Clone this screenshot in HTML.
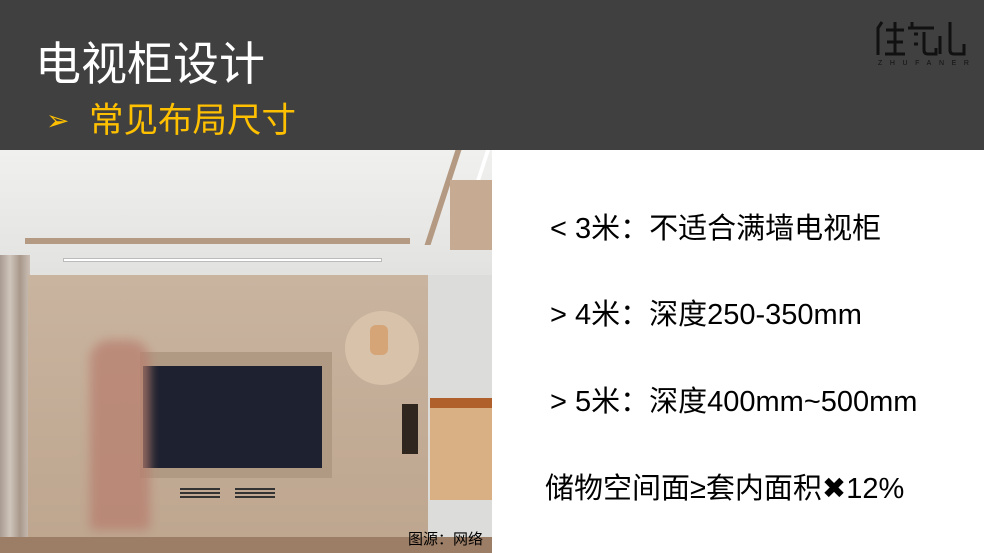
<!DOCTYPE html>
<html><head><meta charset="utf-8"><style>
*{margin:0;padding:0;box-sizing:border-box}
body{width:984px;height:553px;overflow:hidden;background:#fff;font-family:"Liberation Sans","Noto Sans CJK SC",sans-serif;position:relative}
.a{position:absolute}
.hdr{left:0;top:0;width:984px;height:150px;background:#404040}
.t{left:35px;top:36px;font-size:46px;color:#fff;line-height:56px;white-space:nowrap}
.s{left:89px;top:100px;font-size:34.5px;color:#ffc000;line-height:42px;white-space:nowrap}
.r{font-size:29px;color:#000;white-space:nowrap;line-height:34px}
</style></head><body>
<div class="a hdr"></div>
<div class="a t">电视柜设计</div>
<div class="a" style="left:46px;top:104px;font-size:28px;color:#ffc000;line-height:34px">➢</div>
<div class="a s">常见布局尺寸</div>
<svg class="a" style="left:874px;top:14px" width="100" height="46" viewBox="0 0 100 46" fill="none" stroke="#111" stroke-width="3">
 <path d="M8 8 L4 14 L4 41"/>
 <path d="M12 16 H30 M21 8 V40 M13 28 H29 M11 40 H31"/>
 <path d="M38 8 V14 M34 14 H60 M40 20 H44 M40 30 H44 M50 18 V36 Q50 40 54 40 H62 V34"/>
 <path d="M66 22 V40 M76 8 V36 Q76 40 80 40 H90 V30"/>
</svg>
<div class="a" style="left:878px;top:60px;font-size:7px;letter-spacing:7.6px;color:#111;line-height:8px">ZHUFANER</div>

<!-- photo -->
<div class="a" style="left:0;top:150px;width:492px;height:403px;overflow:hidden;background:#e8e8e6">
 <div class="a" style="left:0;top:0;width:492px;height:125px;background:linear-gradient(#f0f0ee,#e2e2e0)"></div>
 <div class="a" style="left:25px;top:88px;width:385px;height:6px;background:#b49a82"></div>
 <div class="a" style="left:63px;top:108px;width:319px;height:4px;background:#fff;border:1px solid #bbb"></div>
 <div class="a" style="left:440px;top:0;width:6px;height:95px;background:#b49a82;transform:skewX(-18deg)"></div>
 <div class="a" style="left:448px;top:0;width:4px;height:80px;background:#fff;transform:skewX(-18deg) translateX(25px)"></div>
 <div class="a" style="left:450px;top:30px;width:42px;height:70px;background:#c6ab92"></div>
 <div class="a" style="left:428px;top:125px;width:64px;height:278px;background:#dcdcda"></div>
 <div class="a" style="left:0;top:105px;width:30px;height:298px;background:linear-gradient(90deg,#a89c92,#cfc5bb,#a8988b,#cbbfb5)"></div>
 <div class="a" style="left:28px;top:125px;width:400px;height:262px;background:linear-gradient(#c9b4a0,#bea68f)"></div>
 <div class="a" style="left:140px;top:202px;width:192px;height:126px;background:#b19a84"></div>
 <div class="a" style="left:143px;top:216px;width:179px;height:102px;background:#1d2130"></div>
 <div class="a" style="left:345px;top:161px;width:74px;height:74px;border-radius:50%;background:#d8c2aa"></div>
 <div class="a" style="left:370px;top:175px;width:18px;height:30px;background:#d6a577;border-radius:6px"></div>
 <div class="a" style="left:402px;top:254px;width:16px;height:50px;background:#2f2620"></div>
 <div class="a" style="left:180px;top:338px;width:40px;height:12px;background:repeating-linear-gradient(#333 0 2px,transparent 2px 4px)"></div>
 <div class="a" style="left:235px;top:338px;width:40px;height:12px;background:repeating-linear-gradient(#333 0 2px,transparent 2px 4px)"></div>
 <div class="a" style="left:90px;top:190px;width:60px;height:190px;background:#b87f6f;opacity:.75;border-radius:20px 20px 5px 5px;filter:blur(5px)"></div>
 <div class="a" style="left:430px;top:258px;width:62px;height:92px;background:#d8b084"></div>
 <div class="a" style="left:430px;top:248px;width:62px;height:10px;background:#b0602a"></div>
 <div class="a" style="left:0;top:387px;width:492px;height:16px;background:#9c7d66"></div>
 <div class="a" style="left:408px;top:380px;font-size:15px;color:#000;line-height:20px">图源：网络</div>
</div>

<div class="a r" style="left:550px;top:212px">&lt; 3米：不适合满墙电视柜</div>
<div class="a r" style="left:550px;top:298px">&gt; 4米：深度250-350mm</div>
<div class="a r" style="left:550px;top:385px">&gt; 5米：深度400mm~500mm</div>
<div class="a r" style="left:545px;top:472px">储物空间面≥套内面积✖12%</div>
</body></html>
